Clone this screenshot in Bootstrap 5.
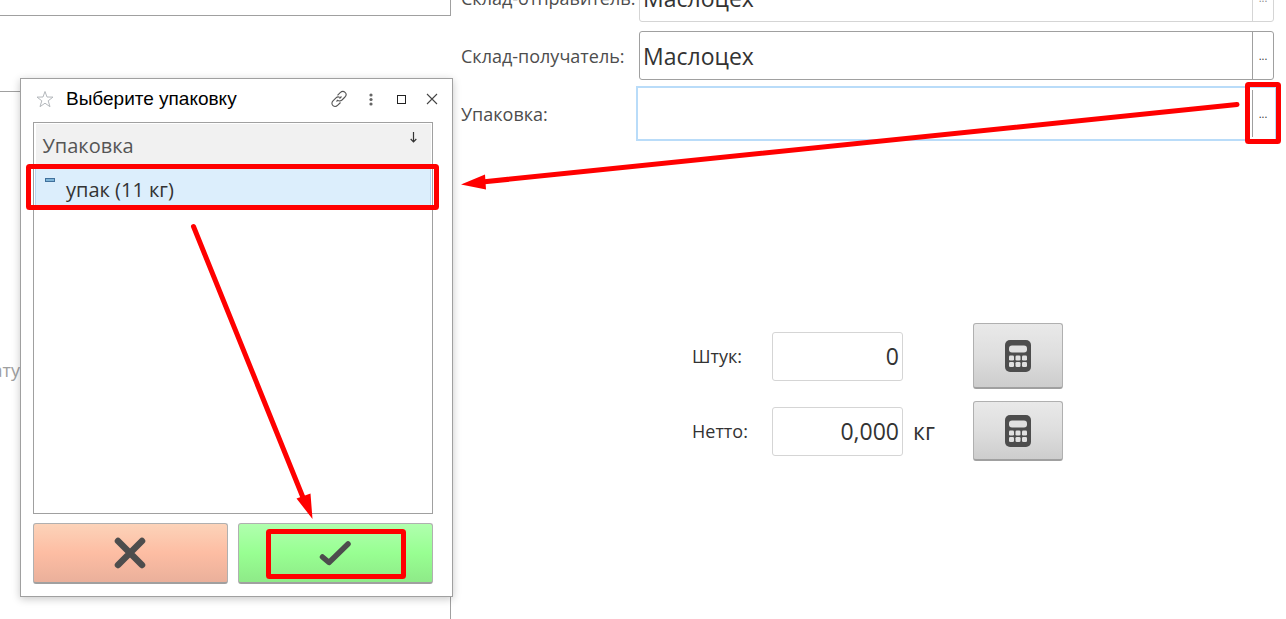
<!DOCTYPE html>
<html lang="ru">
<head>
<meta charset="utf-8">
<meta name="viewport" content="width=device-width, initial-scale=1">
<title>Выберите упаковку</title>
<link href="https://cdn.jsdelivr.net/npm/bootstrap@5.3.0/dist/css/bootstrap.min.css" rel="stylesheet">
<style>
  body { font-family: "Open Sans", "Noto Sans", sans-serif; color: #333; background: #fff; overflow: hidden; }
  .workspace { min-height: 100vh; }
  .side-pane { width: 451px; }
  .side-top { height: 16px; border: solid #a0a0a0; border-width: 0 1px 1px 0; }
  .side-main { margin-top: 75px; border: solid #a0a0a0; border-width: 1px 1px 0 0; }
  .side-hint { width: 20px; margin-top: 265px; font-size: 18px; line-height: 26px; color: #a0a0a0; }
  .form-pane { padding: 0 12px 0 10px; margin-top: -27px; }
  .form-lines { gap: 9px; }
  .form-lines label, .amounts label { font-size: 18px; line-height: 24px; color: #4d4d4d; }
  .form-lines label { width: 178px; }
  .amounts label { width: 80px; color: #333; }
  .field { height: 49px; border: 1px solid #a0a0a0; border-radius: 3px; background: #fff; }
  .field.pale { border-color: #d5d5d5; }
  .field.active { border-color: transparent; outline: 2px solid #b9dcf9; outline-offset: 1px; border-radius: 0; }
  .field input, .amounts input { font-size: 23px; line-height: 32px; color: #333; padding: 0 3px; background: transparent; outline: 0; }
  .field input { border: 0; }
  .pick { width: 21px; border: 0; border-left: 1px solid #a0a0a0; background: transparent; font-size: 11px; line-height: 12px; padding: 0; color: #333; }
  .pale .pick { border-color: #d5d5d5; color: #888; }
  .amounts { margin: 185px 0 0 231px; gap: 12px; }
  .amounts input { width: 131px; height: 49px; border: 1px solid #d5d5d5; border-radius: 3px; }
  .unit { width: 70px; padding-left: 10px; font-size: 23px; line-height: 32px; }
  .calc { width: 90px; height: 60px; border: 1px solid #b0b0b0; border-bottom: 2px solid #a0a0a0; border-radius: 3px; background: linear-gradient(#e9e9e9, #dedede 50%, #cdcdcd); }
  .calc.tall { height: 66px; }
  .picker { left: 20px; top: 78px; width: 433px; padding: 0 19px 12px 12px; border: 1px solid #a0a0a0; background: #fff; box-shadow: 0 2px 8px rgba(0,0,0,.22); }
  .picker-head { height: 43px; padding: 0 0 4px 3px; margin-right: -8px; }
  .picker-head h1 { font-family: "Liberation Sans", Arial, sans-serif; font-size: 19px; line-height: 24px; color: #000; }
  .tool { border: 0; background: transparent; padding: 0; width: 18px; height: 18px; }
  .tool-set { gap: 13px; }
  .list-box { height: 392px; border: 1px solid #a0a0a0; padding: 1px; margin-bottom: 9px; }
  .list-box table { width: 100%; font-size: 20px; line-height: 28px; }
  .list-box th { height: 43px; padding: 2px 7px 0; background: #f1f1f1; color: #555; font-weight: 400; }
  .list-box td { height: 40px; padding: 6px 8px 0; background: #dceefc; color: #333; border: 1px solid #b5d8f7; }
  .answers { column-gap: 10px; }
  .answer { height: 61px; border: 1px solid #b0b0b0; border-bottom: 2px solid #a0a0a0; border-radius: 3px; }
  .answer-no { background: linear-gradient(#fcd3b9, #fdbda3 50%, #eab09b); }
  .answer-yes { background: linear-gradient(#b0ffae, #98ff92 50%, #8eea88); }
  .marks { left: 0; top: 0; pointer-events: none; }
</style>
</head>
<body>
<svg class="d-none" xmlns="http://www.w3.org/2000/svg">
  <symbol id="calculator" viewBox="0 0 26 32">
    <rect width="26" height="32" rx="5" fill="#4d4d4d"/>
    <g fill="#e0e0e0"><rect x="4" y="5.500" width="18" height="7" rx="3"/>
    <rect x="4" y="15.500" width="5" height="5" rx="1.300"/><rect x="10.500" y="15.500" width="5" height="5" rx="1.300"/><rect x="17" y="15.500" width="5" height="5" rx="1.300"/>
    <rect x="4" y="22" width="5" height="5" rx="1.300"/><rect x="10.500" y="22" width="5" height="5" rx="1.300"/><rect x="17" y="22" width="5" height="5" rx="1.300"/></g>
  </symbol>
</svg>

<div class="workspace d-flex position-relative">
  <aside class="side-pane d-flex flex-column flex-shrink-0">
    <div class="side-top"></div>
    <div class="side-main flex-grow-1">
      <div class="side-hint d-flex justify-content-end overflow-hidden"><span>ату</span></div>
    </div>
  </aside>

  <main class="form-pane flex-grow-1">
    <form>
      <div class="form-lines d-flex flex-column">
        <div class="d-flex align-items-center">
          <label for="from" class="flex-shrink-0">Склад-отправитель:</label>
          <div class="field pale d-flex flex-grow-1">
            <input id="from" class="flex-grow-1" type="text" value="Маслоцех">
            <button type="button" class="pick" aria-label="Выбрать">...</button>
          </div>
        </div>
        <div class="d-flex align-items-center">
          <label for="to" class="flex-shrink-0">Склад-получатель:</label>
          <div class="field d-flex flex-grow-1">
            <input id="to" class="flex-grow-1" type="text" value="Маслоцех">
            <button type="button" class="pick" aria-label="Выбрать">...</button>
          </div>
        </div>
        <div class="d-flex align-items-center">
          <label for="pack" class="flex-shrink-0">Упаковка:</label>
          <div class="field active d-flex flex-grow-1">
            <input id="pack" class="flex-grow-1" type="text">
            <button type="button" class="pick" aria-label="Выбрать">...</button>
          </div>
        </div>
      </div>

      <div class="amounts d-flex flex-column">
        <div class="d-flex align-items-center">
          <label for="pieces">Штук:</label>
          <input id="pieces" class="text-end" type="text" value="0">
          <span class="unit"></span>
          <button type="button" class="calc tall d-flex align-items-center justify-content-center" aria-label="Калькулятор"><svg width="26" height="32"><use href="#calculator"/></svg></button>
        </div>
        <div class="d-flex align-items-center">
          <label for="net">Нетто:</label>
          <input id="net" class="text-end" type="text" value="0,000">
          <span class="unit">кг</span>
          <button type="button" class="calc d-flex align-items-center justify-content-center" aria-label="Калькулятор"><svg width="26" height="32"><use href="#calculator"/></svg></button>
        </div>
      </div>
    </form>
  </main>

  <section class="picker position-absolute" role="dialog" aria-labelledby="picker-title">
    <header class="picker-head d-flex align-items-center">
      <button class="tool d-flex me-2" type="button" aria-label="В избранное"><svg width="18" height="18" viewBox="0 0 18 18"><path d="M9 1.500l2 5.500 6 .1-4.800 3.700 1.800 5.900-5-3.500-5 3.500 1.800-5.900L1 7.100 7 7z" fill="none" stroke="#b4b8bc"/></svg></button>
      <h1 id="picker-title" class="m-0 ms-1 ps-0">Выберите упаковку</h1>
      <div class="tool-set d-flex ms-auto align-items-center">
        <button class="tool d-flex" type="button" aria-label="Ссылка"><svg width="18" height="18" viewBox="0 0 18 18" fill="none" stroke="#555" stroke-width="1.100"><path d="M7.500 5.300l2.700-2.700c3.400-3.200 7.900.9 4.800 4.400l-3 3c-1.200 1.100-2.500 1.200-3.700.5M10.500 12.500l-2.700 2.700c-3.300 3.300-8-.9-4.800-4.400l3-3c1.100-1.100 2.400-1.200 3.600-.6M6.500 11.500l1.500-1.500M9.500 8.500l2-2"/></svg></button>
        <button class="tool d-flex" type="button" aria-label="Ещё"><svg width="18" height="18" fill="#666"><circle cx="10" cy="5" r="1.600"/><circle cx="10" cy="9.500" r="1.600"/><circle cx="10" cy="14" r="1.600"/></svg></button>
        <button class="tool d-flex" type="button" aria-label="Развернуть"><svg width="18" height="18"><rect x="5.500" y="5.500" width="8" height="8" fill="none" stroke="#222"/></svg></button>
        <button class="tool d-flex" type="button" aria-label="Закрыть"><svg width="18" height="18"><path d="M4 4l10 10M14 4L4 14" stroke="#444" stroke-width="1.100"/></svg></button>
      </div>
    </header>
    <div class="list-box">
      <table>
        <thead><tr><th scope="col"><div class="d-flex justify-content-between">Упаковка
          <svg width="22" height="20" class="flex-shrink-0"><path d="M11.500 0v9.500M8.700 7l2.800 2.800L14.300 7" fill="none" stroke="#333" stroke-width="1.200"/></svg></div></th></tr></thead>
        <tbody><tr><td><div class="d-flex">
          <svg width="22" height="20" class="flex-shrink-0"><rect x="1.500" y="2.500" width="9" height="3" fill="#7fb5d8" stroke="#41719c"/></svg>упак (11 кг)</div></td></tr></tbody>
      </table>
    </div>
    <div class="answers row g-0">
      <button type="button" class="answer answer-no col d-flex align-items-center justify-content-center" aria-label="Отмена"><svg width="34" height="34"><path d="M4 5l24 24M28 5L4 29" stroke="#4d4d4d" stroke-width="6.500" stroke-linecap="round"/></svg></button>
      <button type="button" class="answer answer-yes col d-flex align-items-center justify-content-center" aria-label="Выбрать"><svg width="34" height="34"><path d="M3.500 21l6.500 5.500L29 8" fill="none" stroke="#4d4d4d" stroke-width="5.500" stroke-linecap="round" stroke-linejoin="round"/></svg></button>
    </div>
  </section>

  <svg class="marks position-absolute" width="1286" height="619" fill="none" stroke="#f00" stroke-width="5" aria-hidden="true">
    <rect x="28.500" y="166.500" width="408" height="41" rx="1"/>
    <rect x="1247.500" y="84.500" width="31" height="57" rx="1"/>
    <rect x="268.500" y="531.500" width="135" height="45" rx="1"/>
    <path d="M1237 104.500L482 182M193.500 226.500L304 500" stroke-linecap="round"/>
    <path d="M461 184.500l24-10 1 15zM312.500 519l-16-20.500 14-5z" fill="#f00" stroke="none"/>
  </svg>
</div>
<script src="https://cdn.jsdelivr.net/npm/bootstrap@5.3.0/dist/js/bootstrap.bundle.min.js"></script>
</body>
</html>
